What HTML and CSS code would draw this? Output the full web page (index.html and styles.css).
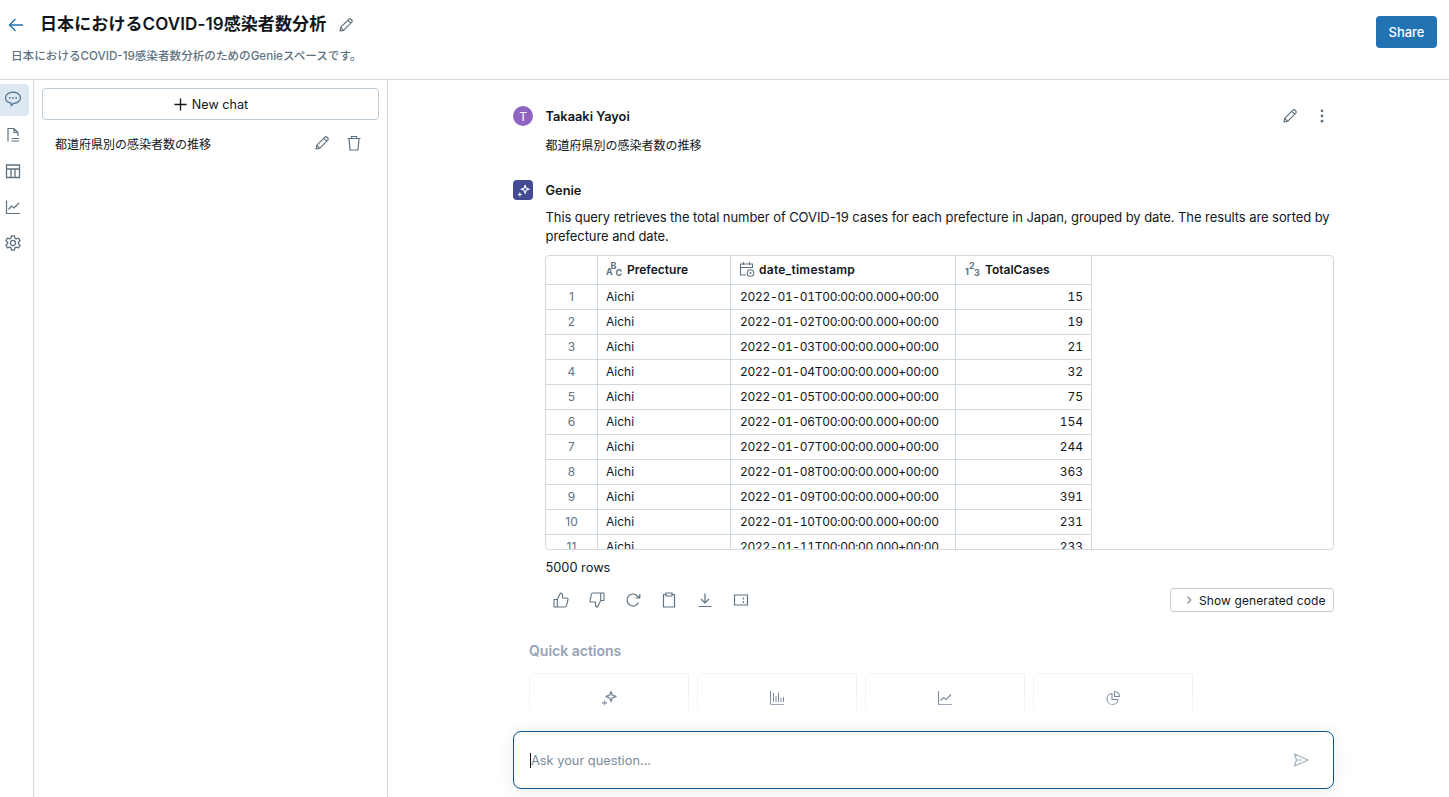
FILE: index.html
```html
<!DOCTYPE html>
<html lang="ja">
<head>
<meta charset="utf-8">
<title>Genie</title>
<link rel="stylesheet" href="styles.css">
</head>
<body>
<svg class="defs" width="0" height="0" aria-hidden="true">
  <defs>
    <symbol id="pencil" viewBox="0 0 16 16"><path d="M2 14l.7-3.6L10.9 2.2a1.5 1.5 0 0 1 2.1 0l.8.8a1.5 1.5 0 0 1 0 2.1L5.6 13.3 2 14zM2.7 10.4l2.9 2.9M9.8 3.3l2.9 2.9" fill="none" stroke="currentColor" stroke-width="1.2" stroke-linejoin="round"/></symbol>
    <symbol id="sparkle" viewBox="0 0 16 16"><path d="M10 1.500l1.300 3.700 3.700 1.300-3.700 1.300L10 11.500 8.700 7.800 5 6.500l3.700-1.300z" fill="none" stroke="currentColor" stroke-width="1.400" stroke-linejoin="round"/><path d="M3.500 10.500v5M1 13h5" stroke="currentColor" stroke-width="1.300" fill="none"/></symbol>
  </defs>
</svg>
<div class="app">
  <header class="topbar">
    <div class="title-block">
      <div class="title-row">
        <svg class="back" viewBox="0 0 16 16"><path d="M15 8H1.500M7.500 2L1.500 8l6 6" fill="none" stroke="currentColor" stroke-width="1.400"/></svg>
        <h1>日本におけるCOVID-19感染者数分析</h1>
        <svg class="ico ico-title"><use href="#pencil"/></svg>
      </div>
      <p class="subtitle">日本におけるCOVID-19感染者数分析のためのGenieスペースです。</p>
    </div>
    <button class="share">Share</button>
  </header>
  <div class="body">
    <nav class="rail">
      <div class="rail-btn active"><svg viewBox="0.5 1 15 14.500"><path d="M8 1.800c3.900 0 7 2.300 7 5.300s-3.100 5.200-6.200 5.200l-2.500 2.100v-2.300C3.300 11.600 1 9.700 1 7.100c0-3 3.100-5.300 7-5.300z" fill="none" stroke="currentColor" stroke-width="1.100"/><circle cx="5" cy="7.200" r=".8" fill="currentColor"/><circle cx="8" cy="7.200" r=".8" fill="currentColor"/><circle cx="11" cy="7.200" r=".8" fill="currentColor"/></svg></div>
      <div class="rail-btn"><svg viewBox="0 0 16 16"><path d="M3 14.500V1.500h6l4 4v3.500M9 1.500v4h4M6.500 11.500H14M6.500 14H14" fill="none" stroke="currentColor" stroke-width="1.200"/></svg></div>
      <div class="rail-btn"><svg viewBox="0 0 16 16"><path d="M1.500 2h13v12.500h-13zM1.500 6h13M6 6v8.500M10 6v8.500" fill="none" stroke="currentColor" stroke-width="1.300"/></svg></div>
      <div class="rail-btn"><svg viewBox="0 0 16 16"><path d="M1.500 1.500v13h13.500M3.500 10.500l3-3.500 2.500 2 5-5" fill="none" stroke="currentColor" stroke-width="1.200"/></svg></div>
      <div class="rail-btn"><svg viewBox="1 0.500 14 13.600"><path d="M6.700 1h2.600l.4 2 1.200.7 2-.7 1.300 2.300-1.500 1.300v1.400l1.500 1.300-1.300 2.300-2-.7-1.200.7-.4 2H6.700l-.4-2-1.200-.7-2 .7-1.300-2.300 1.500-1.300V6.600L1.800 5.300 3.100 3l2 .7 1.200-.7z" fill="none" stroke="currentColor" stroke-width="1.100" stroke-linejoin="round"/><circle cx="8" cy="7.300" r="2.200" fill="none" stroke="currentColor" stroke-width="1.100"/></svg></div>
    </nav>
    <aside class="chats">
      <button class="new-chat"><svg viewBox="0 0 16 16"><path d="M8 1.500v13M1.500 8h13" stroke="currentColor" stroke-width="1.400" fill="none"/></svg>New chat</button>
      <div class="chat-item">
        <span>都道府県別の感染者数の推移</span>
        <div class="chat-tools">
          <svg class="ico ico-lg"><use href="#pencil"/></svg>
          <svg class="ico ico-lg" viewBox="0 0 16 16"><path d="M1.500 3.500h13M5.500 3.500V1.500h5v2M3 3.500l1 11.500h8l1-11.500" fill="none" stroke="currentColor" stroke-width="1.200"/></svg>
        </div>
      </div>
    </aside>
    <main class="main">
      <div class="scroll">
        <section class="msg msg-user">
          <div class="msg-head">
            <span class="avatar">T</span>
            <strong>Takaaki Yayoi</strong>
            <div class="msg-tools">
              <svg class="ico ico-lg"><use href="#pencil"/></svg>
              <svg class="ico ico-lg" viewBox="0 0 16 16"><circle cx="8" cy="2.800" r="1.400" fill="currentColor"/><circle cx="8" cy="8" r="1.400" fill="currentColor"/><circle cx="8" cy="13.200" r="1.400" fill="currentColor"/></svg>
            </div>
          </div>
          <p class="msg-text">都道府県別の感染者数の推移</p>
        </section>
        <section class="msg msg-genie">
          <div class="msg-head">
            <span class="genie-logo"><svg viewBox="0 0 16 16"><use href="#sparkle"/></svg></span>
            <strong>Genie</strong>
          </div>
          <p class="msg-text answer">This query retrieves the total number of COVID-19 cases for each prefecture in Japan, grouped by date. The results are sorted by prefecture and date.</p>
          <div class="table-wrap">
            <table>
              <thead>
                <tr>
                  <th class="c-idx"></th>
                  <th class="c-pref"><span class="th-in"><svg viewBox="0 0 16 16"><text x="0" y="13.500" class="abc">A</text><text x="4.500" y="8" class="abc">B</text><text x="9.500" y="15" class="abc">C</text></svg>Prefecture</span></th>
                  <th class="c-date"><span class="th-in th-date"><svg viewBox="0 0 16 16"><path d="M7 14H1.500V3h12v4M1.500 6.500h12M4.500 1v3M10.500 1v3" fill="none" stroke="currentColor" stroke-width="1.100"/><circle cx="11.500" cy="12" r="3.300" fill="none" stroke="currentColor" stroke-width="1.100"/><circle cx="11.500" cy="12" r="1" fill="currentColor"/></svg>date_timestamp</span></th>
                  <th class="c-total"><span class="th-in"><svg viewBox="0 0 16 16"><text x="1" y="13.500" class="abc">1</text><text x="5" y="8" class="abc">2</text><text x="10" y="15" class="abc">3</text></svg>TotalCases</span></th>
                  <th class="c-fill"></th>
                </tr>
              </thead>
              <tbody>
                <tr><td class="idx">1</td><td>Aichi</td><td class="date">2022-01-01T00:00:00.000+00:00</td><td class="num">15</td><td class="blank"></td></tr>
                <tr><td class="idx">2</td><td>Aichi</td><td class="date">2022-01-02T00:00:00.000+00:00</td><td class="num">19</td><td class="blank"></td></tr>
                <tr><td class="idx">3</td><td>Aichi</td><td class="date">2022-01-03T00:00:00.000+00:00</td><td class="num">21</td><td class="blank"></td></tr>
                <tr><td class="idx">4</td><td>Aichi</td><td class="date">2022-01-04T00:00:00.000+00:00</td><td class="num">32</td><td class="blank"></td></tr>
                <tr><td class="idx">5</td><td>Aichi</td><td class="date">2022-01-05T00:00:00.000+00:00</td><td class="num">75</td><td class="blank"></td></tr>
                <tr><td class="idx">6</td><td>Aichi</td><td class="date">2022-01-06T00:00:00.000+00:00</td><td class="num">154</td><td class="blank"></td></tr>
                <tr><td class="idx">7</td><td>Aichi</td><td class="date">2022-01-07T00:00:00.000+00:00</td><td class="num">244</td><td class="blank"></td></tr>
                <tr><td class="idx">8</td><td>Aichi</td><td class="date">2022-01-08T00:00:00.000+00:00</td><td class="num">363</td><td class="blank"></td></tr>
                <tr><td class="idx">9</td><td>Aichi</td><td class="date">2022-01-09T00:00:00.000+00:00</td><td class="num">391</td><td class="blank"></td></tr>
                <tr><td class="idx">10</td><td>Aichi</td><td class="date">2022-01-10T00:00:00.000+00:00</td><td class="num">231</td><td class="blank"></td></tr>
                <tr><td class="idx">11</td><td>Aichi</td><td class="date">2022-01-11T00:00:00.000+00:00</td><td class="num">233</td><td class="blank"></td></tr>
              </tbody>
            </table>
          </div>
          <p class="rows">5000 rows</p>
          <div class="actions">
            <div class="action-icons">
              <svg viewBox="0 0 16 16"><path d="M1 7.500h3.300V15H1zM4.300 7.500L7.500 1c1.300 0 2 .8 2 2v3h4.300c.9 0 1.400.7 1.200 1.500l-1.400 6c-.2.900-.8 1.500-1.700 1.500H4.300" fill="none" stroke="currentColor" stroke-width="1.100" stroke-linejoin="round"/></svg>
              <svg viewBox="0 0 16 16"><path d="M15 8.500h-3.300V1H15zM11.700 8.500L8.500 15c-1.300 0-2-.8-2-2v-3H2.200C1.300 10 .8 9.300 1 8.500l1.400-6C2.600 1.600 3.200 1 4.100 1h7.600" fill="none" stroke="currentColor" stroke-width="1.100" stroke-linejoin="round"/></svg>
              <svg viewBox="0 0 16 16"><path d="M13.500 10.500A6 6 0 1 1 12.500 4L14.500 6M14.800 1.800V6h-4.200" fill="none" stroke="currentColor" stroke-width="1.200"/></svg>
              <svg viewBox="0 0 16 16"><path d="M5 2.500H2.500v12.500h11V2.500H11M5 1h6v3H5z" fill="none" stroke="currentColor" stroke-width="1.200"/></svg>
              <svg viewBox="0 0 16 16"><path d="M8 1.500v9M4 7l4 4 4-4M1.500 14.500h13" fill="none" stroke="currentColor" stroke-width="1.200"/></svg>
              <svg viewBox="0 0 16 16"><path d="M1.500 3h13v10h-13zM10.500 5.500v2M10.500 9v2" fill="none" stroke="currentColor" stroke-width="1.200"/></svg>
            </div>
            <button class="show-code"><svg viewBox="0 0 16 16"><path d="M6 3.500L10.500 8 6 12.500" fill="none" stroke="currentColor" stroke-width="1.400"/></svg>Show generated code</button>
          </div>
        </section>
        <section class="quick">
          <h2>Quick actions</h2>
          <div class="quick-grid">
            <div class="quick-card"><svg viewBox="0 0 16 16"><use href="#sparkle"/></svg></div>
            <div class="quick-card"><svg viewBox="0 0 16 16"><path d="M1.500 1v13.500H15M4.500 3v9M7 6v6M9.500 2.500V12M12 8v4M14.500 7v5" fill="none" stroke="currentColor" stroke-width="1"/></svg></div>
            <div class="quick-card"><svg viewBox="0 0 16 16"><path d="M1.500 1v13.500H15M3.500 10.500l3-3 2.500 2 5-5" fill="none" stroke="currentColor" stroke-width="1.100"/></svg></div>
            <div class="quick-card"><svg viewBox="0 0 16 16"><path d="M7 3.500a5.500 5.500 0 1 0 6 6H7zM9.500 1.500a5 5 0 0 1 5 5h-5z" fill="none" stroke="currentColor" stroke-width="1.100"/></svg></div>
          </div>
        </section>
      </div>
      <div class="composer">
        <div class="input-box">
          <span class="caret"></span><span class="placeholder">Ask your question...</span>
          <svg class="send" viewBox="0 0 16 16"><path d="M1.500 2L15 8 1.500 14 3.500 8zM3.500 8H9" fill="none" stroke="currentColor" stroke-width="1.200" stroke-linejoin="round"/></svg>
        </div>
      </div>
    </main>
  </div>
</div>
</body>
</html>
```
FILE: styles.css
```css
* { box-sizing: border-box; }
html, body { margin: 0; height: 100%; overflow: hidden; }
body {
  font-family: Inter, "Noto Sans CJK JP", sans-serif;
  font-size: 13px;
  color: #11171c;
  background: #fff;
}
.defs { position: absolute; }
svg { display: block; flex: none; }
p, h1, h2 { margin: 0; }
button { font-family: inherit; cursor: pointer; }

.app { height: 797px; display: flex; flex-direction: column; }

.topbar {
  height: 80px;
  flex: none;
  border-bottom: 1px solid #d1d9e1;
  display: flex;
  justify-content: space-between;
  align-items: flex-start;
  padding: 16px 12px 0 8px;
}
.title-row { display: flex; align-items: center; height: 17px; }
.back { width: 16px; height: 16px; color: #2272b4; margin-right: 16px; }
h1 { font-size: 17px; line-height: 17px; font-weight: 600; letter-spacing: .1px; }
.ico { color: #5f7281; }
.ico-title { width: 16px; height: 16px; margin-left: 12px; }
.subtitle { margin: 16px 0 0 3px; font-size: 11.600px; line-height: 14px; font-weight: 500; color: #5f7281; }
.share {
  width: 61px;
  height: 32px;
  padding: 0 0 1px;
  background: #2272b4;
  border: 0;
  border-radius: 4px;
  color: #fff;
  font-size: 13px;
  font-weight: 500;
}

.body { flex: 1; display: flex; min-height: 0; }

.rail {
  width: 34px;
  flex: none;
  border-right: 1px solid #d1d9e1;
  padding-top: 4px;
  display: flex;
  flex-direction: column;
  gap: 4px;
}
.rail-btn {
  width: 29px;
  height: 32px;
  padding: 0 3px 2px 0;
  border-radius: 0 4px 4px 0;
  display: flex;
  align-items: center;
  justify-content: center;
  color: #5f7281;
}
.rail-btn svg { width: 16px; height: 16px; }
.rail-btn.active { background: #dde8f2; color: #4a6e8c; }

.chats {
  width: 354px;
  flex: none;
  border-right: 1px solid #d1d9e1;
  padding: 8px 8px 0;
}
.new-chat {
  width: 337px;
  height: 32px;
  display: flex;
  align-items: center;
  justify-content: center;
  gap: 4px;
  background: #fff;
  border: 1px solid #c0cdd8;
  border-radius: 4px;
  font-size: 12.600px;
  color: #11171c;
}
.new-chat svg { width: 15px; height: 15px; }
.chat-item {
  height: 32px;
  margin-top: 7px;
  padding: 0 17px 0 13px;
  width: 337px;
  display: flex;
  align-items: center;
  justify-content: space-between;
  font-size: 12px;
}
.chat-tools { display: flex; gap: 16px; }
.ico-lg { width: 16px; height: 16px; }

.main { flex: 1; min-width: 0; display: flex; flex-direction: column; position: relative; }
.scroll { height: 647px; flex: none; overflow: hidden; padding: 0 0 0 125px; }

.msg { width: 821px; }
.msg-user { padding: 26px 4px 0 0; width: 821px; }
.msg-genie { padding-top: 25px; }
.msg-head { display: flex; align-items: center; height: 20px; }
.msg-head strong { font-weight: 600; font-size: 12.800px; margin-left: 12.500px; }
.msg-tools { margin-left: auto; display: flex; gap: 16px; }
.avatar {
  width: 20px;
  height: 20px;
  border-radius: 50%;
  background: #8f63c0;
  color: #fff;
  font-size: 12px;
  display: flex;
  align-items: center;
  justify-content: center;
}
.genie-logo {
  width: 20px;
  height: 20px;
  border-radius: 4px;
  background: #434a93;
  color: #fff;
  display: flex;
  align-items: center;
  justify-content: center;
}
.genie-logo svg { width: 13px; height: 13px; }
.msg-text { margin: 10px 0 0 32.500px; font-size: 12px; line-height: 19px; }
.answer { font-size: 13px; margin-top: 8px; letter-spacing: -.006em; }

.table-wrap {
  margin: 9px 0 0 32px;
  height: 295px;
  border: 1px solid #d1d9e1;
  border-radius: 4px;
  overflow: hidden;
}
table { border-collapse: separate; border-spacing: 0; table-layout: fixed; width: 788px; font-size: 12px; }
th, td {
  border-right: 1px solid #d1d9e1;
  border-bottom: 1px solid #d1d9e1;
  padding: 0 8px 2px;
  white-space: nowrap;
  text-align: left;
}
th { height: 29px; font-weight: 600; }
td { height: 25px; }
.c-idx { width: 52px; }
.c-pref { width: 133px; }
.c-date { width: 225px; }
.c-total { width: 136px; }
.c-fill, .blank { border: 0; }
.th-in { display: flex; align-items: center; gap: 5px; }
.th-date { gap: 4px; letter-spacing: .25px; }
.th-in svg { width: 16px; height: 16px; color: #5f7281; }
.abc { font-size: 9px; font-weight: 700; fill: #5f7281; font-family: Inter, sans-serif; letter-spacing: 0; }
.idx { text-align: center; color: #5f7281; }
.num { text-align: right; font-variant-numeric: tabular-nums; }
td.date { padding-left: 9px; font-variant-numeric: tabular-nums; letter-spacing: -.3px; }

.rows { margin: 9px 0 0 32.500px; font-size: 12.800px; line-height: 18px; }
.actions { margin: 11px 0 0 33px; display: flex; align-items: center; justify-content: space-between; height: 24px; }
.action-icons { display: flex; gap: 20px; padding-left: 7px; color: #5f7281; }
.action-icons svg { width: 16px; height: 16px; }
.show-code {
  width: 164px;
  height: 24px;
  background: #fff;
  border: 1px solid #c0cdd8;
  border-radius: 4px;
  display: flex;
  align-items: center;
  gap: 4px;
  padding: 0 0 0 12px;
  font-size: 12px;
  letter-spacing: .1px;
  color: #11171c;
}
.show-code svg { width: 12px; height: 12px; color: #5f7281; }

.quick { margin: 29px 0 0 16px; }
.quick h2 { font-size: 14px; line-height: 20px; font-weight: 600; color: #94a3b8; }
.quick-grid { display: flex; gap: 8px; margin-top: 12px; }
.quick-card {
  width: 160px;
  height: 80px;
  border: 1px solid #f0f2f5;
  border-radius: 4px;
  padding-top: 16px;
  display: flex;
  justify-content: center;
  color: #7d8ba0;
}
.quick-card svg { width: 16px; height: 16px; }

.composer {
  flex: none;
  padding: 31px 0 0 125px;
  position: relative;
  background: linear-gradient(rgba(255,255,255,0), #fff 18px);
  margin-top: -27px;
}
.input-box {
  width: 821px;
  height: 58px;
  border: 1px solid #0e538b;
  border-radius: 8px;
  background: #fff;
  box-shadow: 0 2px 16px rgba(27,49,66,.10);
  display: flex;
  align-items: center;
  padding: 0 24px 0 16px;
  font-size: 12.800px;
}
.caret { width: 1px; height: 15px; background: #11171c; }
.placeholder { color: #7b8c9b; flex: 1; }
.send { width: 16px; height: 16px; color: #9fb0c0; }
```
